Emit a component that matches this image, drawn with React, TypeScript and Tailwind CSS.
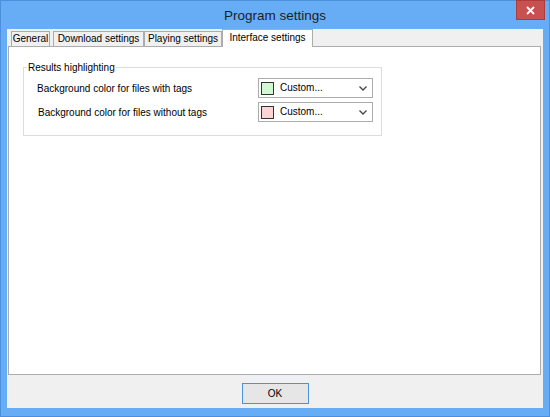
import React from 'react';

const UI = { fontFamily: '"Liberation Sans", Arial, sans-serif' };

function Tab({ label, active, className }: { label: string; active?: boolean; className: string }) {
  if (active) {
    return (
      <div className={`relative z-10 mb-[-1px] h-[18px] bg-white border border-b-0 border-[#acacac] flex items-center justify-center whitespace-nowrap text-[10px] text-black leading-none pb-[2px] ${className}`}>
        {label}
      </div>
    );
  }
  return (
    <div className={`h-[15px] bg-[#f0f0f0] border border-b-0 border-[#acacac] flex items-center justify-center whitespace-nowrap text-[10px] text-black leading-none ${className}`}>
      {label}
    </div>
  );
}

function ColorCombo({ swatch }: { swatch: string }) {
  return (
    <div className="w-[115px] h-[20px] bg-white border border-[#acacac] flex items-center">
      <div className={`ml-[2px] w-[13px] h-[13px] border border-[#333] ${swatch}`} />
      <span className="ml-[6px] text-[10px] text-black leading-none">Custom...</span>
      <svg className="ml-auto mr-[5px]" width="8" height="5" viewBox="0 0 8 5">
        <path d="M0.5 0.5 L4 4 L7.5 0.5" fill="none" stroke="#444" strokeWidth="1.3" />
      </svg>
    </div>
  );
}

export default function App() {
  return (
    <div className="w-[550px] h-[417px] bg-[#66adf5] border border-[#4c8fdc] flex flex-col select-none" style={UI}>
      {/* Title bar */}
      <div className="relative h-[28px] flex items-center justify-center">
        <span className="text-[13.5px] text-[#1e1e1e] pt-[2px]">Program settings</span>
        <div className="absolute right-[4px] top-[-1px] w-[29px] h-[20px] bg-[#c75050] border border-[#b03b3b] flex items-center justify-center">
          <svg width="9" height="9" viewBox="0 0 9 9">
            <path d="M1 1 L8 8 M8 1 L1 8" stroke="white" strokeWidth="1.8" />
          </svg>
        </div>
      </div>

      {/* Client area */}
      <div className="flex-1 mx-[6px] mb-[8px] bg-[#f0f0f0] flex flex-col">
        {/* Tab strip */}
        <div className="h-[17px] flex items-end pl-[4px]">
          <Tab label="General" className="w-[39px]" />
          <Tab label="Download settings" className="w-[91px] ml-[3px]" />
          <Tab label="Playing settings" className="w-[78px]" />
          <Tab label="Interface settings" active className="w-[91px]" />
        </div>

        {/* Tab panel */}
        <div className="h-[329px] ml-[1px] mr-[2px] bg-white border border-[#acacac] pl-[14px] pt-[14px]">
          <fieldset className="w-[359px] border border-[#dcdcdc] pl-[13px] pr-[8px] pb-[13px]">
            <legend className="ml-[-10px] px-[1px] text-[10px] leading-[13px] text-black">Results highlighting</legend>
            <div className="mt-[4px] flex flex-col gap-[4px]">
              <div className="h-[20px] flex items-center justify-between">
                <span className="text-[10px] text-black">Background color for files with tags</span>
                <ColorCombo swatch="bg-[#d2f8d2]" />
              </div>
              <div className="h-[20px] flex items-center justify-between">
                <span className="text-[10px] text-black ml-[1px]">Background color for files without tags</span>
                <ColorCombo swatch="bg-[#fbd4d4]" />
              </div>
            </div>
          </fieldset>
        </div>

        {/* Footer */}
        <div className="flex-1 flex justify-center pt-[8px]">
          <button className="w-[67px] h-[21px] bg-[#e6e6e6] border border-[#4a92dc] text-[10px] text-black leading-none">
            OK
          </button>
        </div>
      </div>
    </div>
  );
}
